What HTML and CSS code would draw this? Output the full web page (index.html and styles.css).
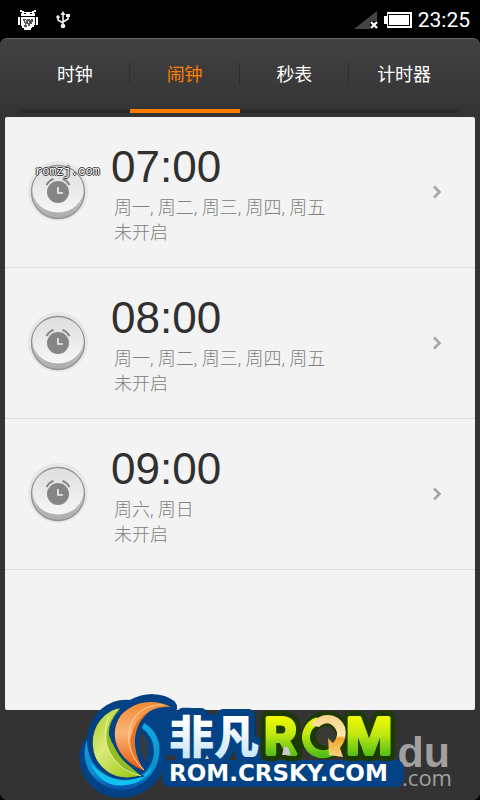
FILE: index.html
```html
<!DOCTYPE html>
<html lang="zh-CN">
<head>
<meta charset="utf-8">
<meta name="viewport" content="width=device-width, initial-scale=1">
<title>闹钟</title>
<link rel="stylesheet" href="styles.css">
</head>
<body>
<svg class="defs" aria-hidden="true">
  <defs>
    <linearGradient id="rim" x1="0" y1="0" x2="0" y2="1"><stop offset="0" stop-color="#dedede"/><stop offset="1" stop-color="#acacac"/></linearGradient>
    <linearGradient id="face" x1="0" y1="0" x2="0" y2="1"><stop offset="0" stop-color="#dedede"/><stop offset="1" stop-color="#f6f6f6"/></linearGradient>
    <symbol id="alarm" viewBox="0 0 62 62">
      <circle cx="31" cy="30" r="30" fill="#e6e6e6"/>
      <circle cx="31" cy="31" r="26.500" fill="url(#rim)" stroke="#929292" stroke-width="1.300"/>
      <ellipse cx="31" cy="28.500" rx="25.500" ry="23" fill="url(#face)"/>
      <circle cx="31" cy="31" r="11" fill="#858585"/>
      <path d="M19.500 24q3-5 7-6M42.500 24q-3-5-7-6" fill="none" stroke="#858585" stroke-width="2"/>
      <path d="M31 26v6h5" fill="none" stroke="#f2f2f2" stroke-width="1.600"/>
    </symbol>
    <symbol id="chevron" viewBox="0 0 10 14"><path d="M2 1.500L7.500 7 2 12.500" fill="none" stroke="#a6a6a6" stroke-width="2.600"/></symbol>
  </defs>
</svg>

<header class="status">
  <div class="status-group">
    <svg class="robot" viewBox="0 0 20 20" aria-hidden="true">
      <path d="M2 0h2v1h2v1h8V1h2V0h2v2h-2v1h1v3H3V3h1V2H2z" fill="#fff"/>
      <path d="M6 3h2v1H6zM12 3h2v1h-2z" fill="#000"/>
      <path d="M0 7h2v8H0zM18 7h2v8h-2zM3 7h14v8h-1v2h-2v1h-1v2H6v-2H4v-2H3z" fill="#fff"/>
      <path d="M5 9h3v1h1V9h3v1h1V9h2v3h-1v2h-2v2h-2v-2H9v3H6v-2h1v-2H6v-2H5z" fill="#555"/>
      <path d="M7 10h1v2H7zM10 11h1v2h-1zM8 14h1v1H8z" fill="#ddd"/>
    </svg>
    <svg class="usb" viewBox="0 0 16 18" aria-hidden="true">
      <path d="M8 3v12M8 12L3 9V6M8 11l5-3V5" fill="none" stroke="#eee" stroke-width="1.6"/>
      <path d="M8 0l2.500 4h-5z" fill="#eee"/><circle cx="8" cy="15" r="2.300" fill="#eee"/><circle cx="3" cy="6" r="1.800" fill="#eee"/><path d="M11 3h4v3h-4z" fill="#eee"/>
    </svg>
  </div>
  <div class="status-group status-right">
    <svg class="signal" viewBox="0 0 24 20" aria-hidden="true">
      <path d="M0 19L23 1v10h-7v8z" fill="#444"/><path d="M17 12l6 6M23 12l-6 6" stroke="#fff" stroke-width="2.400"/>
    </svg>
    <svg class="battery" viewBox="0 0 28 16" aria-hidden="true">
      <path d="M3 0h25v16H3v-4H0V4h3z" fill="#fff"/><rect x="4.500" y="2.500" width="21" height="11" fill="#fff" stroke="#000"/>
    </svg>
    <time class="clock">23:25</time>
  </div>
</header>

<main class="app">
  <nav class="tabs">
    <a class="tab" href="#clock">时钟</a>
    <a class="tab active" href="#alarm-list" aria-current="page">闹钟</a>
    <a class="tab" href="#stopwatch">秒表</a>
    <a class="tab" href="#timer">计时器</a>
  </nav>
  <ul class="list" id="alarm-list">
    <li><a class="row" href="#a1">
      <span class="badge"><svg class="alarm"><use href="#alarm"/></svg><span class="stamp">romzj.com</span></span>
      <span class="info"><span class="time">07:00</span><span class="sub">周一, 周二, 周三, 周四, 周五</span><span class="sub">未开启</span></span>
      <svg class="chevron"><use href="#chevron"/></svg>
    </a></li>
    <li><a class="row" href="#a2">
      <span class="badge"><svg class="alarm"><use href="#alarm"/></svg></span>
      <span class="info"><span class="time">08:00</span><span class="sub">周一, 周二, 周三, 周四, 周五</span><span class="sub">未开启</span></span>
      <svg class="chevron"><use href="#chevron"/></svg>
    </a></li>
    <li><a class="row" href="#a3">
      <span class="badge"><svg class="alarm"><use href="#alarm"/></svg></span>
      <span class="info"><span class="time">09:00</span><span class="sub">周六, 周日</span><span class="sub">未开启</span></span>
      <svg class="chevron"><use href="#chevron"/></svg>
    </a></li>
  </ul>
</main>

<svg class="brand" viewBox="75 685 405 115" role="img" aria-label="ROM.CRSKY.COM">
  <defs>
    <linearGradient id="ice" x1="0" y1="0" x2="0" y2="1"><stop offset=".3" stop-color="#fff"/><stop offset="1" stop-color="#b9dff7"/></linearGradient>
    <linearGradient id="lime" gradientUnits="userSpaceOnUse" x1="0" y1="715" x2="0" y2="756"><stop offset="0" stop-color="#f4fa00"/><stop offset=".45" stop-color="#c4ea10"/><stop offset="1" stop-color="#52bd17"/></linearGradient>
    <linearGradient id="leaf" x1="0" y1="0" x2="1" y2="1"><stop offset="0" stop-color="#a5ca20"/><stop offset=".4" stop-color="#dbe978"/><stop offset="1" stop-color="#8fc400"/></linearGradient>
    <linearGradient id="flame" x1="0" y1="0" x2="0" y2="1"><stop offset="0" stop-color="#f18a35"/><stop offset=".45" stop-color="#fbb477"/><stop offset="1" stop-color="#e9550c"/></linearGradient>
    <linearGradient id="sea" x1="0" y1="0" x2="0" y2="1"><stop offset="0" stop-color="#12a8df"/><stop offset=".75" stop-color="#0a8bd0"/><stop offset="1" stop-color="#0b4ea5"/></linearGradient>
    <linearGradient id="gold" x1="0" y1="0" x2="0" y2="1"><stop offset="0" stop-color="#f8d48c"/><stop offset=".5" stop-color="#ffe5ad"/><stop offset=".55" stop-color="#efa42b"/><stop offset="1" stop-color="#fbd683"/></linearGradient>
  </defs>
  <g fill="#a0a0a0">
    <text class="ghost-large" x="450" y="767" text-anchor="end">du</text>
    <text class="ghost-small" x="452" y="786" text-anchor="end">u.com</text>
  </g>
  <path d="M88 737C91 714 109 699 130 701C145 693 162 693 174 702Q180 710 169 716L164 727C170 755 164 780 143 791C126 800 104 799 91 784C79 772 76 751 88 737Z" fill="#034284" stroke="#034284" stroke-width="2"/>
  <path d="M142 731Q152 746 145 762Q136 748 142 731Z" fill="#353b42"/>
  <path d="M87 740C78 764 95 789 121 790C147 789 163 765 159 743Q156 730 144 723L142 728Q153 736 154 750C154 770 138 781 120 780C102 777 87 763 87 740Z" fill="url(#sea)"/>
  <path d="M90 762Q101 789 126 785Q144 783 153 767Q139 782 122 780Q103 778 90 762Z" fill="#10c0ee"/>
  <path d="M123 707C103 708 90 727 92 747C94 766 112 785 142 776Q119 768 112 751C104 733 110 719 123 707Z" fill="url(#leaf)" stroke="#034284" stroke-width="2"/>
  <path d="M121 709C97 728 102 763 141 776Q115 755 109 735Q108 721 121 709Z" fill="#93bd20"/>
  <path d="M109 716C98 744 112 768 141 776" fill="none" stroke="#e8f29a"/>
  <path d="M171 707C154 698 134 701 121 715C108 733 115 760 145 771C130 754 130 724 150 711Q160 706 171 707Z" fill="url(#flame)" stroke="#034284" stroke-width="5" paint-order="stroke"/>
  <path d="M169 707Q147 706 135 725C125 746 133 761 144 770C131 751 131 726 150 711Q159 706 169 707Z" fill="#e67624"/>
  <path d="M163 705C139 704 126 722 129 743Q132 760 144 770" fill="none" stroke="#ffd2a4"/>
  <rect x="162" y="760" width="242" height="27" rx="8" fill="#034284"/>
  <text class="logo-cn" x="169" y="754" fill="url(#ice)" stroke="#034284">非凡</text>
  <text class="logo-url" x="169" y="781" fill="#fff" stroke="#034284">ROM.CRSKY.COM</text>
  <g class="logo-outline" stroke="#1d3a05" fill="#1d3a05">
    <text x="264" y="754">R</text><circle cx="326" cy="735" r="17"/><text x="346" y="754">M</text>
    <path d="M285 742h92"/>
  </g>
  <g class="logo-rom" fill="url(#lime)" stroke="url(#lime)">
    <text x="264" y="754">R</text><text x="346" y="754">M</text>
  </g>
  <circle cx="326" cy="736" r="10" fill="#3a3a35"/>
  <path d="M333 751A17 17 0 1 1 318 721" fill="none" stroke="url(#lime)" stroke-width="8"/>
  <path d="M311 725C319 711 339 712 345 727Q348 738 340 748L343 757L329 755L328 738L333 743Q340 735 335 728Q328 719 319 727Z" fill="url(#gold)"/>
  <path d="M284 747h4l3 8h-9zM205 759l2-4 2 4z" fill="#c8c8c8"/>
</svg>
</body>
</html>
```

FILE: styles.css
```css
* { box-sizing: border-box; }

body {
  position: relative;
  display: flex;
  flex-direction: column;
  min-height: 100vh;
  margin: 0;
  overflow-x: hidden;
  background: #000;
  color: #fff;
  font-family: Roboto, "Noto Sans CJK SC", sans-serif;
  font-size: 18px;
}

a { color: inherit; text-decoration: none; }

.defs { position: absolute; width: 0; height: 0; }

.status {
  display: flex;
  justify-content: space-between;
  align-items: center;
  height: 38px;
  padding: 2px 10px 0 18px;
}
.status-group { display: flex; align-items: center; gap: 17px; }
.status-right { gap: 6px; }
.robot { width: 20px; height: 20px; }
.usb { width: 16px; height: 18px; }
.signal { width: 24px; height: 20px; }
.battery { width: 28px; height: 16px; }
.clock { font-size: 21px; line-height: 24px; }

.app {
  flex: 1;
  display: flex;
  flex-direction: column;
  padding: 0 5px 90px;
  border-top: 1px solid #626262;
  border-radius: 7px;
  background: linear-gradient(#424242, #333 80px);
}

.tabs {
  display: flex;
  height: 74px;
  margin: 0 16px 4px 15px;
}
.tab {
  flex: 1;
  padding-top: 23px;
  border-bottom: 4px solid #2c2c2c;
  background: linear-gradient(#2f2f2f, #2f2f2f) no-repeat right 24px / 1px 22px;
  line-height: 26px;
  text-align: center;
}
.tab:last-child { background: none; }
.tab.active { border-color: #ff7e00; color: #ff7e00; }

.list {
  flex: 1;
  margin: 0;
  padding: 0;
  border-radius: 2px;
  background: #f3f3f3;
  list-style: none;
}
.row {
  display: flex;
  align-items: center;
  height: 151px;
  padding: 0 33px 0 22px;
  border-bottom: 1px solid #dcdcdc;
}
.badge { position: relative; display: flex; margin-right: 25px; }
.alarm { width: 62px; height: 62px; }
.stamp {
  position: absolute;
  left: 8px;
  top: 4px;
  color: #fff;
  font: 12px/14px "Liberation Mono", monospace;
  text-shadow: 1px 0 #333, -1px 0 #333, 0 1px #333, 0 -1px #333;
}
.info { flex: 1; display: flex; flex-direction: column; }
.time {
  margin-left: -3px;
  color: #303030;
  font-family: "Liberation Sans", Arial, sans-serif;
  font-size: 44px;
  line-height: 56px;
}
.sub { color: #808080; font-weight: 300; line-height: 25px; }
.chevron { width: 10px; height: 14px; }

.brand {
  position: absolute;
  right: 0;
  bottom: 0;
  width: 405px;
  height: 115px;
  pointer-events: none;
}
.brand text { paint-order: stroke; stroke-linejoin: round; }
.ghost-large { font: bold 43px "Liberation Sans", sans-serif; }
.ghost-small { font: 500 22px "Open Sans", sans-serif; }
.logo-cn { font: 900 45px "Noto Sans CJK SC", sans-serif; stroke-width: 14px; }
.logo-url { font: bold 23px "DejaVu Sans", sans-serif; stroke-width: 8px; }
.logo-outline, .logo-rom { font: 600 50px Inter, sans-serif; }
.logo-outline { stroke-width: 14px; }
.logo-rom { stroke-width: 4px; }
```
